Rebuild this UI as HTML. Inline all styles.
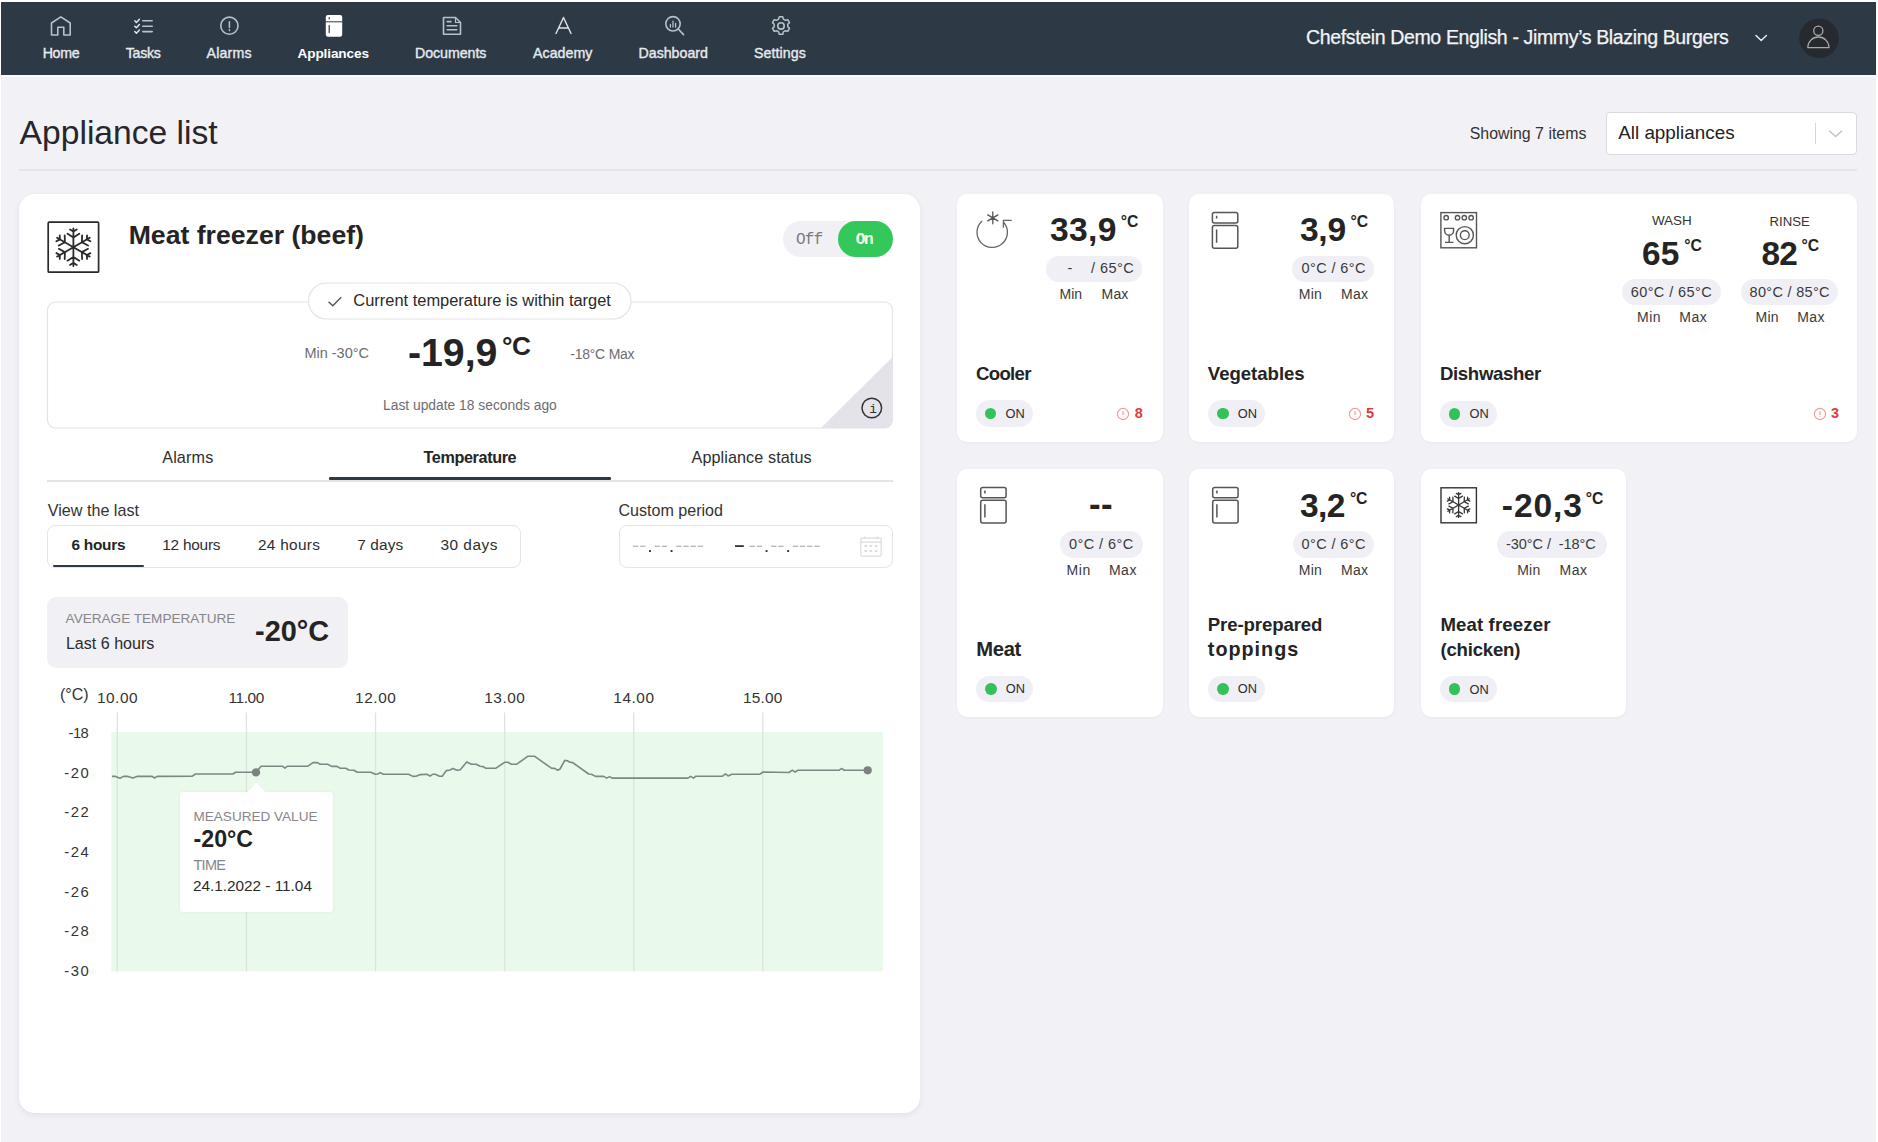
<!DOCTYPE html>
<html><head><meta charset="utf-8"><title>Appliance list</title>
<style>
html,body{margin:0;padding:0;}
body{width:1878px;height:1142px;position:relative;overflow:hidden;background:#fff;font-family:"Liberation Sans", sans-serif;}
.t{position:absolute;white-space:pre;font-family:"Liberation Sans", sans-serif;}
svg{overflow:visible;}
</style></head><body>
<div style="position:absolute;left:1px;top:77px;width:1875px;height:1065px;background:#f2f1f6;"></div>
<div style="position:absolute;left:1px;top:2px;width:1875px;height:73px;background:#2d3a46;"></div>
<div style="position:absolute;left:1px;top:75px;width:1875px;height:2px;background:#fafafc;"></div>
<div class="t" style="left:42.70px;top:44.96px;font-size:14.20px;line-height:17.04px;font-weight:normal;color:#e8ebee;letter-spacing:-0.338px;-webkit-text-stroke:0.35px #e8ebee;">Home</div>
<div class="t" style="left:125.80px;top:44.96px;font-size:14.20px;line-height:17.04px;font-weight:normal;color:#e8ebee;letter-spacing:-0.295px;-webkit-text-stroke:0.35px #e8ebee;">Tasks</div>
<div class="t" style="left:206.50px;top:44.96px;font-size:14.20px;line-height:17.04px;font-weight:normal;color:#e8ebee;letter-spacing:0.168px;-webkit-text-stroke:0.35px #e8ebee;">Alarms</div>
<div class="t" style="left:297.50px;top:45.53px;font-size:13.60px;line-height:16.32px;font-weight:bold;color:#ffffff;letter-spacing:-0.117px;">Appliances</div>
<div class="t" style="left:415.00px;top:44.96px;font-size:14.20px;line-height:17.04px;font-weight:normal;color:#e8ebee;letter-spacing:-0.044px;-webkit-text-stroke:0.35px #e8ebee;">Documents</div>
<div class="t" style="left:533.00px;top:44.96px;font-size:14.20px;line-height:17.04px;font-weight:normal;color:#e8ebee;letter-spacing:0.048px;-webkit-text-stroke:0.35px #e8ebee;">Academy</div>
<div class="t" style="left:638.50px;top:44.96px;font-size:14.20px;line-height:17.04px;font-weight:normal;color:#e8ebee;-webkit-text-stroke:0.35px #e8ebee;">Dashboard</div>
<div class="t" style="left:754.00px;top:44.96px;font-size:14.20px;line-height:17.04px;font-weight:normal;color:#e8ebee;letter-spacing:0.095px;-webkit-text-stroke:0.35px #e8ebee;">Settings</div>
<svg style="position:absolute;left:0;top:0" width="1878" height="80" fill="none" stroke="#b9c1c9" stroke-width="1.6" stroke-linejoin="round" stroke-linecap="round">
<path d="M51.5 35 V23 L60.8 16.8 L70.2 23 V35 H63.8 V27.2 H57.8 V35 Z"/>
<path d="M134.8 20.8 l1.6 1.6 l3-3.2 M134.8 26.2 l1.6 1.6 l3-3.2 M134.8 31.6 l1.6 1.6 l3-3.2" stroke="#e8ebee" stroke-width="1.4"/>
<path d="M142.8 20.8 H152.2 M142.8 26.2 H152.2 M142.8 31.6 H152.2" stroke-width="1.6"/>
<circle cx="229.4" cy="25.7" r="8.6"/>
<path d="M229.4 21.8 V27.6 M229.4 29.8 V30.4" stroke-width="1.5"/>
<rect x="325.8" y="15" width="16.4" height="21.7" rx="2.2" fill="#ffffff" stroke="none"/>
<path d="M325.8 21.8 H342.2" stroke="#2d3a46" stroke-width="1"/>
<path d="M329.2 17.6 V18.8 M329.2 25.4 V32.6" stroke="#2d3a46" stroke-width="1.2"/>
<path d="M443.5 17.5 H455.5 L460.5 22.5 V34.3 H443.5 Z" />
<path d="M455.5 17.5 V22.5 H460.5" stroke-width="1.2"/>
<path d="M447.2 21.6 H451 M447.2 25.8 H456.8 M447.2 29.8 H456.8" stroke-width="1.6"/>
<path d="M556 33.5 L563.5 17.5 L571 33.5 M558.6 28 H568.4" stroke="#dfe3e7" stroke-width="1.4"/>
<circle cx="673" cy="23.8" r="7.2"/>
<path d="M678.2 29 L683.6 34.6"/>
<path d="M670.4 27 V24.4 M673 27 V21.2 M675.6 27 V23.4" stroke-width="1.3"/>
<circle cx="781" cy="25.9" r="3.2"/>
<path d="M779.3 16.8 h3.4 l0.7 2.3 l2.1 1.2 l2.3-0.6 l1.7 2.9 l-1.7 1.7 v2.4 l1.7 1.7 l-1.7 2.9 l-2.3-0.6 l-2.1 1.2 l-0.7 2.3 h-3.4 l-0.7-2.3 l-2.1-1.2 l-2.3 0.6 l-1.7-2.9 l1.7-1.7 v-2.4 l-1.7-1.7 l1.7-2.9 l2.3 0.6 l2.1-1.2 z" stroke-width="1.5"/>
<path d="M1756 35.5 L1761.2 40.5 L1766.4 35.5" stroke="#e8ebee" stroke-width="1.5"/>
<circle cx="1819" cy="38.2" r="19.8" fill="#262a2e" stroke="none"/>
<circle cx="1818.3" cy="30.8" r="4.6" stroke="#a9a9a9" stroke-width="1.3"/>
<path d="M1807.8 47.6 A10.6 10.6 0 0 1 1829 47.6 Z" stroke="#a9a9a9" stroke-width="1.3"/>
</svg>
<div class="t" style="left:1306.00px;top:26.41px;font-size:19.54px;line-height:23.45px;font-weight:normal;color:#f2f4f6;letter-spacing:-0.372px;-webkit-text-stroke:0.25px #f2f4f6;">Chefstein Demo English - Jimmy’s Blazing Burgers</div>
<div class="t" style="left:19.60px;top:112.57px;font-size:33.63px;line-height:40.36px;font-weight:normal;color:#26262b;">Appliance list</div>
<div style="position:absolute;left:19px;top:169.4px;width:1838px;height:1.4000000000000057px;background:#e6e5ec;"></div>
<div class="t" style="left:1469.70px;top:123.93px;font-size:15.92px;line-height:19.11px;font-weight:normal;color:#333;">Showing 7 items</div>
<div style="position:absolute;left:1605.5px;top:112px;width:251.5px;height:42.5px;background:#fff;border:1px solid #d9d9de;border-radius:4px;box-sizing:border-box;"></div>
<div class="t" style="left:1618.20px;top:122.24px;font-size:18.87px;line-height:22.64px;font-weight:normal;color:#222;">All appliances</div>
<div style="position:absolute;left:1814.5px;top:123px;width:1.0px;height:21px;background:#d4d4d8;"></div>
<svg style="position:absolute;left:1820px;top:120px" width="30" height="25" fill="none" stroke="#c2c2c6" stroke-width="1.4"><path d="M9.2 10.8 L15.6 16.6 L22 10.8"/></svg>
<div style="position:absolute;left:19px;top:193.5px;width:901px;height:919.5px;background:#fff;border-radius:16px;box-shadow:0 2px 6px rgba(40,40,90,0.08);"></div>
<svg style="position:absolute;left:0;top:0" width="940" height="300"><rect x="48.2" y="222.2" width="50.4" height="50" rx="1" fill="none" stroke="#2a2a2a" stroke-width="1.7"/><path d="M73.40 247.20 L73.40 228.40 M73.40 237.42 L67.50 233.74 M73.40 237.42 L79.30 233.74 M73.40 231.60 L70.05 229.50 M73.40 231.60 L76.75 229.50 M73.40 247.20 L57.12 237.80 M64.93 242.31 L58.79 245.58 M64.93 242.31 L64.69 235.36 M59.89 239.40 L56.40 241.25 M59.89 239.40 L59.75 235.45 M73.40 247.20 L57.12 256.60 M64.93 252.09 L64.69 259.04 M64.93 252.09 L58.79 248.82 M59.89 255.00 L59.75 258.95 M59.89 255.00 L56.40 253.15 M73.40 247.20 L73.40 266.00 M73.40 256.98 L79.30 260.66 M73.40 256.98 L67.50 260.66 M73.40 262.80 L76.75 264.90 M73.40 262.80 L70.05 264.90 M73.40 247.20 L89.68 256.60 M81.87 252.09 L88.01 248.82 M81.87 252.09 L82.11 259.04 M86.91 255.00 L90.40 253.15 M86.91 255.00 L87.05 258.95 M73.40 247.20 L89.68 237.80 M81.87 242.31 L82.11 235.36 M81.87 242.31 L88.01 245.58 M86.91 239.40 L87.05 235.45 M86.91 239.40 L90.40 241.25" stroke="#2a2a2a" stroke-width="1.8" stroke-linecap="round" fill="none"/></svg>
<div class="t" style="left:128.70px;top:220.19px;font-size:26.63px;line-height:31.96px;font-weight:bold;color:#242424;">Meat freezer (beef)</div>
<div style="position:absolute;left:783px;top:221px;width:109.5px;height:36px;background:#f1f0f5;border-radius:18px;"></div>
<div style="position:absolute;left:837.5px;top:221px;width:55.0px;height:36px;background:#34c759;border-radius:18px;"></div>
<div class="t" style="left:796.00px;top:230.74px;font-size:16.12px;line-height:19.34px;font-weight:normal;color:#7a7a7e;font-family:'Liberation Mono', monospace;letter-spacing:-0.857px;">Off</div>
<div class="t" style="left:855.80px;top:230.74px;font-size:16.12px;line-height:19.34px;font-weight:bold;color:#f3fff3;font-family:'Liberation Mono', monospace;letter-spacing:-1.442px;">On</div>
<svg style="position:absolute;left:0;top:0" width="940" height="440"><rect x="47.5" y="302" width="845" height="126" rx="8" fill="#fff" stroke="#e3e3e8" stroke-width="1.2"/><path d="M821 428 L892.5 357 V420 Q892.5 428 884.5 428 Z" fill="#e4e3ea"/><rect x="308.5" y="283" width="322.5" height="36" rx="18" fill="#fff" stroke="#e3e3e8" stroke-width="1.2"/><path d="M328.5 301.8 L332.8 305.8 L341.2 297.2" fill="none" stroke="#555" stroke-width="1.4"/><circle cx="871.8" cy="408" r="9.8" fill="none" stroke="#333" stroke-width="1.5"/></svg>
<div class="t" style="left:869.30px;top:402.44px;font-size:13.00px;line-height:15.6px;font-weight:normal;color:#333;font-family:'Liberation Mono', monospace;">i</div>
<div class="t" style="left:353.30px;top:291.04px;font-size:16.44px;line-height:19.73px;font-weight:normal;color:#2a2a2a;">Current temperature is within target</div>
<div class="t" style="left:304.40px;top:345.18px;font-size:14.50px;line-height:17.4px;font-weight:normal;color:#6d6d72;">Min -30°C</div>
<div class="t" style="left:570.20px;top:345.71px;font-size:13.94px;line-height:16.72px;font-weight:normal;color:#6d6d72;letter-spacing:-0.198px;">-18°C Max</div>
<div class="t" style="left:407.90px;top:329.40px;font-size:39.30px;line-height:47.16px;font-weight:bold;color:#242424;">-19,9</div>
<div class="t" style="left:502.00px;top:331.27px;font-size:26.23px;line-height:31.48px;font-weight:bold;color:#242424;letter-spacing:-0.380px;">°C</div>
<div class="t" style="left:383.00px;top:396.61px;font-size:13.83px;line-height:16.6px;font-weight:normal;color:#6d6d72;">Last update 18 seconds ago</div>
<div style="position:absolute;left:47px;top:480px;width:846px;height:1.5px;background:#e4e4e8;"></div>
<div style="position:absolute;left:328.5px;top:477.3px;width:282.5px;height:3.1999999999999886px;background:#2f3845;border-radius:1px;"></div>
<div class="t" style="left:162.20px;top:448.37px;font-size:16.20px;line-height:19.44px;font-weight:normal;color:#2e2e2e;letter-spacing:0.144px;">Alarms</div>
<div class="t" style="left:423.50px;top:448.37px;font-size:16.20px;line-height:19.44px;font-weight:bold;color:#242424;letter-spacing:-0.376px;">Temperature</div>
<div class="t" style="left:691.50px;top:448.37px;font-size:16.20px;line-height:19.44px;font-weight:normal;color:#2e2e2e;letter-spacing:0.086px;">Appliance status</div>
<div class="t" style="left:47.70px;top:500.91px;font-size:16.16px;line-height:19.39px;font-weight:normal;color:#333;">View the last</div>
<div class="t" style="left:618.40px;top:500.98px;font-size:16.08px;line-height:19.3px;font-weight:normal;color:#333;">Custom period</div>
<div style="position:absolute;left:47px;top:524.5px;width:474px;height:43.5px;background:#fff;border:1.2px solid #e5e5ea;border-radius:8px;box-sizing:border-box;"></div>
<div style="position:absolute;left:53px;top:565.2px;width:91px;height:2.199999999999932px;background:#2f3845;border-radius:1px;"></div>
<div class="t" style="left:71.50px;top:535.62px;font-size:15.40px;line-height:18.48px;font-weight:bold;color:#242424;letter-spacing:-0.266px;">6 hours</div>
<div class="t" style="left:162.20px;top:535.62px;font-size:15.40px;line-height:18.48px;font-weight:normal;color:#2e2e2e;letter-spacing:-0.229px;">12 hours</div>
<div class="t" style="left:258.00px;top:535.62px;font-size:15.40px;line-height:18.48px;font-weight:normal;color:#2e2e2e;letter-spacing:0.285px;">24 hours</div>
<div class="t" style="left:357.20px;top:535.62px;font-size:15.40px;line-height:18.48px;font-weight:normal;color:#2e2e2e;letter-spacing:0.129px;">7 days</div>
<div class="t" style="left:440.50px;top:535.62px;font-size:15.40px;line-height:18.48px;font-weight:normal;color:#2e2e2e;letter-spacing:0.487px;">30 days</div>
<div style="position:absolute;left:618.5px;top:525px;width:274.0px;height:42.5px;background:#fff;border:1.2px solid #e5e5ea;border-radius:8px;box-sizing:border-box;"></div>
<svg style="position:absolute;left:0;top:0" width="940" height="600"><rect x="632.9" y="545.6" width="5.4" height="1.4" fill="#b9b9bd"/><rect x="640.1" y="545.6" width="5.4" height="1.4" fill="#b9b9bd"/><rect x="649.0" y="550.1" width="1.9" height="1.9" fill="#333"/><rect x="654.5" y="545.6" width="5.4" height="1.4" fill="#b9b9bd"/><rect x="661.7" y="545.6" width="5.4" height="1.4" fill="#b9b9bd"/><rect x="670.6" y="550.1" width="1.9" height="1.9" fill="#333"/><rect x="676.1" y="545.6" width="5.4" height="1.4" fill="#b9b9bd"/><rect x="683.3" y="545.6" width="5.4" height="1.4" fill="#b9b9bd"/><rect x="690.5" y="545.6" width="5.4" height="1.4" fill="#b9b9bd"/><rect x="697.7" y="545.6" width="5.4" height="1.4" fill="#b9b9bd"/><rect x="749.5" y="545.6" width="5.4" height="1.4" fill="#b9b9bd"/><rect x="756.7" y="545.6" width="5.4" height="1.4" fill="#b9b9bd"/><rect x="765.6" y="550.1" width="1.9" height="1.9" fill="#333"/><rect x="771.1" y="545.6" width="5.4" height="1.4" fill="#b9b9bd"/><rect x="778.3" y="545.6" width="5.4" height="1.4" fill="#b9b9bd"/><rect x="787.2" y="550.1" width="1.9" height="1.9" fill="#333"/><rect x="792.7" y="545.6" width="5.4" height="1.4" fill="#b9b9bd"/><rect x="799.9" y="545.6" width="5.4" height="1.4" fill="#b9b9bd"/><rect x="807.1" y="545.6" width="5.4" height="1.4" fill="#b9b9bd"/><rect x="814.3" y="545.6" width="5.4" height="1.4" fill="#b9b9bd"/><rect x="735" y="545.2" width="8.8" height="1.8" fill="#333"/><g fill="none" stroke="#dcdce0" stroke-width="1.2"><rect x="860.8" y="538.2" width="20.4" height="18" rx="1.5"/><path d="M860.8 542.2 H881.2 M864.5 536.6 V539 M877.5 536.6 V539"/></g><g fill="#dcdce0"><rect x="864.4" y="545" width="2.6" height="2"/><rect x="869.6" y="545" width="2.6" height="2"/><rect x="874.8" y="545" width="2.6" height="2"/><rect x="864.4" y="550" width="2.6" height="2"/><rect x="869.6" y="550" width="2.6" height="2"/><rect x="874.8" y="550" width="2.6" height="2"/></g></svg>
<div style="position:absolute;left:47.2px;top:596.5px;width:301.1px;height:71.5px;background:#f1f0f5;border-radius:9px;"></div>
<div class="t" style="left:65.60px;top:611.13px;font-size:13.59px;line-height:16.31px;font-weight:normal;color:#86868b;">AVERAGE TEMPERATURE</div>
<div class="t" style="left:65.90px;top:633.97px;font-size:16.09px;line-height:19.31px;font-weight:normal;color:#2a2a2a;">Last 6 hours</div>
<div class="t" style="left:255.00px;top:613.84px;font-size:28.91px;line-height:34.69px;font-weight:bold;color:#242424;">-20°C</div>
<svg style="position:absolute;left:0;top:0" width="940" height="1000"><rect x="111.3" y="731.8" width="771.7" height="239.5" fill="#e9f9ea"/><rect x="116.7" y="712.5" width="1.3" height="259" fill="#dde4de"/><rect x="245.8" y="712.5" width="1.3" height="259" fill="#dde4de"/><rect x="374.9" y="712.5" width="1.3" height="259" fill="#dde4de"/><rect x="504.0" y="712.5" width="1.3" height="259" fill="#dde4de"/><rect x="633.1" y="712.5" width="1.3" height="259" fill="#dde4de"/><rect x="762.2" y="712.5" width="1.3" height="259" fill="#dde4de"/><path d="M111.9 776.4 L115.6 776.4 L119.9 778.2 L123.6 776.4 L127.4 776.2 L132.7 778.0 L137.0 776.4 L151.9 776.2 L154.5 778.0 L157.2 776.4 L192.3 776.2 L195.5 774.0 L232.8 774.0 L235.5 772.3 L256.0 772.3 L261.1 766.2 L282.4 766.2 L284.9 768.1 L287.5 766.2 L307.9 766.2 L313.0 762.6 L317.3 762.6 L320.3 764.3 L327.5 764.3 L331.8 766.4 L336.9 766.4 L340.3 768.3 L345.8 768.3 L348.8 770.0 L353.9 770.2 L357.3 772.3 L370.9 772.3 L375.2 774.3 L377.8 774.0 L380.3 772.6 L383.3 774.3 L408.6 774.3 L412.9 776.4 L416.1 776.2 L420.3 774.6 L427.3 774.3 L429.9 776.1 L432.6 774.3 L435.3 774.3 L439.5 776.2 L442.2 776.2 L446.4 770.6 L450.2 770.0 L452.8 768.4 L457.1 770.3 L460.3 769.7 L466.7 762.0 L471.5 764.2 L476.3 764.2 L480.0 766.3 L483.2 766.6 L485.8 768.2 L496.0 768.2 L504.6 762.3 L507.8 762.3 L511.5 764.2 L516.8 764.2 L528.0 756.2 L534.4 756.2 L551.4 768.2 L554.6 768.4 L557.8 770.2 L560.0 769.0 L564.8 760.4 L567.4 760.8 L569.5 762.0 L572.7 762.6 L588.7 774.0 L591.4 774.3 L595.6 776.4 L603.6 776.4 L606.8 778.1 L609.5 776.6 L612.1 778.1 L687.8 778.1 L690.7 776.4 L693.5 778.1 L695.8 776.2 L722.5 776.2 L725.5 773.9 L728.1 775.9 L731.9 774.2 L760.0 774.2 L763.0 772.0 L789.0 772.5 L792.4 770.2 L795.0 772.0 L798.0 770.2 L839.3 770.2 L841.4 768.5 L844.4 770.3 L867.8 770.3" fill="none" stroke="#7f8782" stroke-width="1.6" stroke-linejoin="round"/><circle cx="256" cy="772.4" r="4.2" fill="#7d8280"/><circle cx="867.7" cy="770.3" r="4.1" fill="#7d8280"/></svg>
<div class="t" style="left:60.00px;top:684.72px;font-size:16.03px;line-height:19.24px;font-weight:normal;color:#333;">(°C)</div>
<div class="t" style="left:96.90px;top:689.12px;font-size:15.40px;line-height:18.48px;font-weight:normal;color:#333;letter-spacing:0.556px;">10.00</div>
<div class="t" style="left:228.40px;top:689.12px;font-size:15.40px;line-height:18.48px;font-weight:normal;color:#333;letter-spacing:-0.356px;">11.00</div>
<div class="t" style="left:355.10px;top:689.12px;font-size:15.40px;line-height:18.48px;font-weight:normal;color:#333;letter-spacing:0.556px;">12.00</div>
<div class="t" style="left:484.20px;top:689.12px;font-size:15.40px;line-height:18.48px;font-weight:normal;color:#333;letter-spacing:0.556px;">13.00</div>
<div class="t" style="left:613.30px;top:689.12px;font-size:15.40px;line-height:18.48px;font-weight:normal;color:#333;letter-spacing:0.556px;">14.00</div>
<div class="t" style="left:743.10px;top:689.12px;font-size:15.40px;line-height:18.48px;font-weight:normal;color:#333;letter-spacing:0.206px;">15.00</div>
<div class="t" style="left:68.60px;top:724.89px;font-size:14.80px;line-height:17.76px;font-weight:normal;color:#333;letter-spacing:-0.643px;">-18</div>
<div class="t" style="left:64.30px;top:764.59px;font-size:14.80px;line-height:17.76px;font-weight:normal;color:#333;letter-spacing:1.507px;">-20</div>
<div class="t" style="left:64.30px;top:804.29px;font-size:14.80px;line-height:17.76px;font-weight:normal;color:#333;letter-spacing:1.507px;">-22</div>
<div class="t" style="left:64.30px;top:843.99px;font-size:14.80px;line-height:17.76px;font-weight:normal;color:#333;letter-spacing:1.507px;">-24</div>
<div class="t" style="left:64.30px;top:883.69px;font-size:14.80px;line-height:17.76px;font-weight:normal;color:#333;letter-spacing:1.507px;">-26</div>
<div class="t" style="left:64.30px;top:923.39px;font-size:14.80px;line-height:17.76px;font-weight:normal;color:#333;letter-spacing:1.507px;">-28</div>
<div class="t" style="left:64.30px;top:963.09px;font-size:14.80px;line-height:17.76px;font-weight:normal;color:#333;letter-spacing:1.507px;">-30</div>
<div style="position:absolute;left:180.2px;top:791.5px;width:152.4px;height:120.7px;background:#fff;border-radius:3px;box-shadow:0 0 3px rgba(0,0,0,0.06);"></div>
<svg style="position:absolute;left:0;top:0" width="940" height="1000"><path d="M247.5 792 L256.4 782.8 L265.3 792 Z" fill="#fff"/></svg>
<div class="t" style="left:193.50px;top:808.96px;font-size:13.56px;line-height:16.28px;font-weight:normal;color:#86868b;">MEASURED VALUE</div>
<div class="t" style="left:193.50px;top:826.01px;font-size:23.23px;line-height:27.88px;font-weight:bold;color:#222;">-20°C</div>
<div class="t" style="left:193.50px;top:857.18px;font-size:14.50px;line-height:17.4px;font-weight:normal;color:#86868b;letter-spacing:-0.752px;">TIME</div>
<div class="t" style="left:192.90px;top:877.08px;font-size:15.34px;line-height:18.41px;font-weight:normal;color:#2a2a2a;">24.1.2022 - 11.04</div>
<div style="position:absolute;left:957px;top:194px;width:205.5px;height:248px;background:#fff;border-radius:10px;box-shadow:0 1px 3px rgba(40,40,80,0.05);"></div>
<div style="position:absolute;left:1189px;top:194px;width:205px;height:248px;background:#fff;border-radius:10px;box-shadow:0 1px 3px rgba(40,40,80,0.05);"></div>
<div style="position:absolute;left:1421px;top:194px;width:436px;height:248px;background:#fff;border-radius:10px;box-shadow:0 1px 3px rgba(40,40,80,0.05);"></div>
<div style="position:absolute;left:957px;top:469px;width:205.5px;height:248px;background:#fff;border-radius:10px;box-shadow:0 1px 3px rgba(40,40,80,0.05);"></div>
<div style="position:absolute;left:1189px;top:469px;width:205px;height:248px;background:#fff;border-radius:10px;box-shadow:0 1px 3px rgba(40,40,80,0.05);"></div>
<div style="position:absolute;left:1421px;top:469px;width:204.70000000000005px;height:248px;background:#fff;border-radius:10px;box-shadow:0 1px 3px rgba(40,40,80,0.05);"></div>
<svg style="position:absolute;left:0;top:0" width="1878" height="760"><g fill="none" stroke="#666" stroke-width="1.3" stroke-linecap="round"><path d="M981.8 221.2 A15.2 15.2 0 1 0 1003.6 222.2"/><path d="M1011.2 220.4 H1003.4 V227.2"/><path d="M992.8 212 V223.8 M987.7 214.9 L997.9 220.9 M987.7 220.9 L997.9 214.9" stroke="#555" stroke-width="1.3"/></g><g fill="none" stroke="#555" stroke-width="1.5"><rect x="1212.4" y="212.6" width="25.4" height="10.4" rx="2"/><rect x="1212.4" y="225.39999999999998" width="25.4" height="22.8" rx="2"/><path d="M1216.6 215.79999999999998 V218.6 M1216.6 229.39999999999998 V242.79999999999998"/></g><g fill="none" stroke="#555" stroke-width="1.4"><rect x="1440.9" y="212.6" width="35.6" height="35.2"/><circle cx="1446.2" cy="217.7" r="2.2"/><circle cx="1457.5" cy="217.7" r="2.2"/><circle cx="1464.3" cy="217.7" r="2.2"/><circle cx="1471.1" cy="217.7" r="2.2"/><path d="M1444.6 228.4 H1453.6 V230.4 A4.5 4.8 0 0 1 1444.6 230.4 Z"/><path d="M1449.2 235.4 V242 M1445 242.4 H1453.4" /><circle cx="1464.8" cy="235.2" r="8.6"/><circle cx="1464.8" cy="235.2" r="4.4"/></g><g fill="none" stroke="#555" stroke-width="1.5"><rect x="980.6999999999999" y="487.4" width="25.4" height="10.4" rx="2"/><rect x="980.6999999999999" y="500.2" width="25.4" height="22.8" rx="2"/><path d="M984.9 490.6 V493.4 M984.9 504.2 V517.6"/></g><g fill="none" stroke="#555" stroke-width="1.5"><rect x="1212.7" y="487.4" width="25.4" height="10.4" rx="2"/><rect x="1212.7" y="500.2" width="25.4" height="22.8" rx="2"/><path d="M1216.8999999999999 490.6 V493.4 M1216.8999999999999 504.2 V517.6"/></g><rect x="1441.0" y="487.8" width="35.4" height="35" fill="none" stroke="#333" stroke-width="1.4"/><path d="M1458.60 505.00 L1458.60 492.60 M1458.60 498.55 L1454.71 496.12 M1458.60 498.55 L1462.49 496.12 M1458.60 494.71 L1456.39 493.33 M1458.60 494.71 L1460.81 493.33 M1458.60 505.00 L1447.86 498.80 M1453.02 501.78 L1448.96 503.93 M1453.02 501.78 L1452.86 497.19 M1449.69 499.85 L1447.39 501.08 M1449.69 499.85 L1449.60 497.25 M1458.60 505.00 L1447.86 511.20 M1453.02 508.22 L1452.86 512.81 M1453.02 508.22 L1448.96 506.07 M1449.69 510.15 L1449.60 512.75 M1449.69 510.15 L1447.39 508.92 M1458.60 505.00 L1458.60 517.40 M1458.60 511.45 L1462.49 513.88 M1458.60 511.45 L1454.71 513.88 M1458.60 515.29 L1460.81 516.67 M1458.60 515.29 L1456.39 516.67 M1458.60 505.00 L1469.34 511.20 M1464.18 508.22 L1468.24 506.07 M1464.18 508.22 L1464.34 512.81 M1467.51 510.15 L1469.81 508.92 M1467.51 510.15 L1467.60 512.75 M1458.60 505.00 L1469.34 498.80 M1464.18 501.78 L1464.34 497.19 M1464.18 501.78 L1468.24 503.93 M1467.51 499.85 L1467.60 497.25 M1467.51 499.85 L1469.81 501.08" stroke="#333" stroke-width="1.3" stroke-linecap="round" fill="none"/></svg>
<div class="t" style="left:1050.00px;top:209.60px;font-size:33.60px;line-height:40.32px;font-weight:bold;color:#242424;letter-spacing:0.383px;">33,9</div>
<div class="t" style="left:1120.80px;top:213.24px;font-size:15.70px;line-height:18.84px;font-weight:bold;color:#242424;letter-spacing:0.016px;">°C</div>
<div style="position:absolute;left:1046px;top:256px;width:96px;height:26px;background:#f0eff5;border-radius:14px;"></div>
<div class="t" style="left:1067.60px;top:260.18px;font-size:14.50px;line-height:17.4px;font-weight:normal;color:#3a3a3a;">-</div>
<div class="t" style="left:1091.00px;top:260.18px;font-size:14.50px;line-height:17.4px;font-weight:normal;color:#3a3a3a;letter-spacing:0.429px;">/ 65°C</div>
<div class="t" style="left:1059.60px;top:285.65px;font-size:14.00px;line-height:16.8px;font-weight:normal;color:#3a3a3a;letter-spacing:-0.120px;">Min</div>
<div class="t" style="left:1101.60px;top:285.65px;font-size:14.00px;line-height:16.8px;font-weight:normal;color:#3a3a3a;letter-spacing:0.120px;">Max</div>
<div class="t" style="left:976.00px;top:363.20px;font-size:18.60px;line-height:22.32px;font-weight:bold;color:#242424;letter-spacing:-0.694px;">Cooler</div>
<div style="position:absolute;left:976px;top:400px;width:57px;height:26.69999999999999px;background:#f0eff5;border-radius:14px;"></div>
<div style="position:absolute;left:984.6px;top:407.5px;width:11.799999999999955px;height:11.800000000000011px;background:#34c15a;border-radius:50%;"></div>
<div class="t" style="left:1005.50px;top:405.88px;font-size:12.80px;line-height:15.36px;font-weight:normal;color:#2a2a2a;">ON</div>
<svg style="position:absolute;left:1114.9px;top:405.6px" width="16" height="16" fill="none" stroke="#eb9a9a" stroke-width="1.1"><circle cx="8" cy="8" r="5.6"/><path d="M8 5.2 V9 M8 10.4 V11" stroke-width="1.2"/></svg>
<div class="t" style="left:1134.70px;top:404.84px;font-size:14.53px;line-height:17.44px;font-weight:bold;color:#e03c3c;">8</div>
<div class="t" style="left:1299.90px;top:209.60px;font-size:33.60px;line-height:40.32px;font-weight:bold;color:#242424;letter-spacing:-0.202px;">3,9</div>
<div class="t" style="left:1350.50px;top:213.24px;font-size:15.70px;line-height:18.84px;font-weight:bold;color:#242424;letter-spacing:0.016px;">°C</div>
<div style="position:absolute;left:1292.4px;top:256px;width:81.5px;height:26px;background:#f0eff5;border-radius:14px;"></div>
<div class="t" style="left:1301.50px;top:260.18px;font-size:14.50px;line-height:17.4px;font-weight:normal;color:#3a3a3a;letter-spacing:0.393px;">0°C / 6°C</div>
<div class="t" style="left:1298.80px;top:285.65px;font-size:14.00px;line-height:16.8px;font-weight:normal;color:#3a3a3a;letter-spacing:0.180px;">Min</div>
<div class="t" style="left:1340.90px;top:285.65px;font-size:14.00px;line-height:16.8px;font-weight:normal;color:#3a3a3a;letter-spacing:0.370px;">Max</div>
<div class="t" style="left:1207.80px;top:363.20px;font-size:18.60px;line-height:22.32px;font-weight:bold;color:#242424;letter-spacing:-0.032px;">Vegetables</div>
<div style="position:absolute;left:1208.3px;top:400px;width:57.0px;height:26.69999999999999px;background:#f0eff5;border-radius:14px;"></div>
<div style="position:absolute;left:1216.8999999999999px;top:407.5px;width:11.800000000000182px;height:11.800000000000011px;background:#34c15a;border-radius:50%;"></div>
<div class="t" style="left:1237.80px;top:405.88px;font-size:12.80px;line-height:15.36px;font-weight:normal;color:#2a2a2a;">ON</div>
<svg style="position:absolute;left:1346.7px;top:405.6px" width="16" height="16" fill="none" stroke="#eb9a9a" stroke-width="1.1"><circle cx="8" cy="8" r="5.6"/><path d="M8 5.2 V9 M8 10.4 V11" stroke-width="1.2"/></svg>
<div class="t" style="left:1365.90px;top:404.84px;font-size:14.53px;line-height:17.44px;font-weight:bold;color:#e03c3c;">5</div>
<div class="t" style="left:1651.90px;top:213.26px;font-size:13.46px;line-height:16.15px;font-weight:normal;color:#333;">WASH</div>
<div class="t" style="left:1769.60px;top:213.55px;font-size:13.16px;line-height:15.79px;font-weight:normal;color:#333;">RINSE</div>
<div class="t" style="left:1641.90px;top:233.59px;font-size:33.40px;line-height:40.08px;font-weight:bold;color:#242424;letter-spacing:0.326px;">65</div>
<div class="t" style="left:1684.30px;top:237.04px;font-size:15.70px;line-height:18.84px;font-weight:bold;color:#242424;letter-spacing:-0.084px;">°C</div>
<div class="t" style="left:1761.60px;top:233.59px;font-size:33.40px;line-height:40.08px;font-weight:bold;color:#242424;letter-spacing:-0.874px;">82</div>
<div class="t" style="left:1801.50px;top:237.04px;font-size:15.70px;line-height:18.84px;font-weight:bold;color:#242424;letter-spacing:-0.084px;">°C</div>
<div style="position:absolute;left:1622px;top:279.3px;width:98.5px;height:25.399999999999977px;background:#f0eff5;border-radius:14px;"></div>
<div style="position:absolute;left:1741.2px;top:279.3px;width:97.20000000000005px;height:25.399999999999977px;background:#f0eff5;border-radius:14px;"></div>
<div class="t" style="left:1630.70px;top:283.88px;font-size:14.50px;line-height:17.4px;font-weight:normal;color:#3a3a3a;letter-spacing:0.415px;">60°C / 65°C</div>
<div class="t" style="left:1749.60px;top:283.88px;font-size:14.50px;line-height:17.4px;font-weight:normal;color:#3a3a3a;letter-spacing:0.305px;">80°C / 85°C</div>
<div class="t" style="left:1636.90px;top:309.25px;font-size:14.00px;line-height:16.8px;font-weight:normal;color:#3a3a3a;letter-spacing:0.580px;">Min</div>
<div class="t" style="left:1679.30px;top:309.25px;font-size:14.00px;line-height:16.8px;font-weight:normal;color:#3a3a3a;letter-spacing:0.520px;">Max</div>
<div class="t" style="left:1755.40px;top:309.25px;font-size:14.00px;line-height:16.8px;font-weight:normal;color:#3a3a3a;letter-spacing:0.330px;">Min</div>
<div class="t" style="left:1797.30px;top:309.25px;font-size:14.00px;line-height:16.8px;font-weight:normal;color:#3a3a3a;letter-spacing:0.370px;">Max</div>
<div class="t" style="left:1439.90px;top:363.20px;font-size:18.60px;line-height:22.32px;font-weight:bold;color:#242424;letter-spacing:-0.327px;">Dishwasher</div>
<div style="position:absolute;left:1440px;top:400.5px;width:57px;height:26.69999999999999px;background:#f0eff5;border-radius:14px;"></div>
<div style="position:absolute;left:1448.6px;top:408.0px;width:11.800000000000182px;height:11.800000000000011px;background:#34c15a;border-radius:50%;"></div>
<div class="t" style="left:1469.50px;top:406.38px;font-size:12.80px;line-height:15.36px;font-weight:normal;color:#2a2a2a;">ON</div>
<svg style="position:absolute;left:1811.7px;top:405.7px" width="16" height="16" fill="none" stroke="#eb9a9a" stroke-width="1.1"><circle cx="8" cy="8" r="5.6"/><path d="M8 5.2 V9 M8 10.4 V11" stroke-width="1.2"/></svg>
<div class="t" style="left:1831.00px;top:404.94px;font-size:14.53px;line-height:17.44px;font-weight:bold;color:#e03c3c;">3</div>
<div class="t" style="left:1088.90px;top:483.41px;font-size:34.85px;line-height:41.83px;font-weight:bold;color:#242424;letter-spacing:0.622px;">--</div>
<div style="position:absolute;left:1060.1px;top:531.3px;width:82.60000000000014px;height:26.40000000000009px;background:#f0eff5;border-radius:14px;"></div>
<div class="t" style="left:1068.90px;top:535.68px;font-size:14.50px;line-height:17.4px;font-weight:normal;color:#3a3a3a;letter-spacing:0.443px;">0°C / 6°C</div>
<div class="t" style="left:1066.40px;top:561.65px;font-size:14.00px;line-height:16.8px;font-weight:normal;color:#3a3a3a;letter-spacing:0.630px;">Min</div>
<div class="t" style="left:1108.90px;top:561.65px;font-size:14.00px;line-height:16.8px;font-weight:normal;color:#3a3a3a;letter-spacing:0.520px;">Max</div>
<div class="t" style="left:976.30px;top:637.28px;font-size:20.20px;line-height:24.24px;font-weight:bold;color:#242424;letter-spacing:-0.352px;">Meat</div>
<div style="position:absolute;left:976.3px;top:675.5px;width:57.0px;height:26.700000000000045px;background:#f0eff5;border-radius:14px;"></div>
<div style="position:absolute;left:984.9px;top:683.0px;width:11.799999999999955px;height:11.799999999999955px;background:#34c15a;border-radius:50%;"></div>
<div class="t" style="left:1005.80px;top:681.38px;font-size:12.80px;line-height:15.36px;font-weight:normal;color:#2a2a2a;">ON</div>
<div class="t" style="left:1299.90px;top:485.90px;font-size:33.60px;line-height:40.32px;font-weight:bold;color:#242424;letter-spacing:-0.602px;">3,2</div>
<div class="t" style="left:1349.90px;top:489.54px;font-size:15.70px;line-height:18.84px;font-weight:bold;color:#242424;letter-spacing:-0.084px;">°C</div>
<div style="position:absolute;left:1292.9px;top:531.3px;width:81.29999999999995px;height:26.40000000000009px;background:#f0eff5;border-radius:14px;"></div>
<div class="t" style="left:1301.50px;top:535.68px;font-size:14.50px;line-height:17.4px;font-weight:normal;color:#3a3a3a;letter-spacing:0.393px;">0°C / 6°C</div>
<div class="t" style="left:1298.80px;top:561.65px;font-size:14.00px;line-height:16.8px;font-weight:normal;color:#3a3a3a;letter-spacing:0.180px;">Min</div>
<div class="t" style="left:1340.90px;top:561.65px;font-size:14.00px;line-height:16.8px;font-weight:normal;color:#3a3a3a;letter-spacing:0.370px;">Max</div>
<div class="t" style="left:1207.80px;top:613.70px;font-size:18.60px;line-height:22.32px;font-weight:bold;color:#242424;letter-spacing:-0.108px;">Pre-prepared</div>
<div class="t" style="left:1207.80px;top:637.66px;font-size:19.80px;line-height:23.76px;font-weight:bold;color:#242424;letter-spacing:0.992px;">toppings</div>
<div style="position:absolute;left:1208.3px;top:675.5px;width:57.0px;height:26.700000000000045px;background:#f0eff5;border-radius:14px;"></div>
<div style="position:absolute;left:1216.8999999999999px;top:683.0px;width:11.800000000000182px;height:11.799999999999955px;background:#34c15a;border-radius:50%;"></div>
<div class="t" style="left:1237.80px;top:681.38px;font-size:12.80px;line-height:15.36px;font-weight:normal;color:#2a2a2a;">ON</div>
<div class="t" style="left:1501.80px;top:485.90px;font-size:33.60px;line-height:40.32px;font-weight:bold;color:#242424;letter-spacing:0.923px;">-20,3</div>
<div class="t" style="left:1585.80px;top:489.54px;font-size:15.70px;line-height:18.84px;font-weight:bold;color:#242424;letter-spacing:-0.084px;">°C</div>
<div style="position:absolute;left:1496.8px;top:531.3px;width:110.20000000000005px;height:26.40000000000009px;background:#f0eff5;border-radius:14px;"></div>
<div class="t" style="left:1506.00px;top:535.68px;font-size:14.50px;line-height:17.4px;font-weight:normal;color:#3a3a3a;letter-spacing:-0.058px;">-30°C /  -18°C</div>
<div class="t" style="left:1517.20px;top:561.65px;font-size:14.00px;line-height:16.8px;font-weight:normal;color:#3a3a3a;letter-spacing:0.230px;">Min</div>
<div class="t" style="left:1559.60px;top:561.65px;font-size:14.00px;line-height:16.8px;font-weight:normal;color:#3a3a3a;letter-spacing:0.470px;">Max</div>
<div class="t" style="left:1440.40px;top:613.60px;font-size:18.60px;line-height:22.32px;font-weight:bold;color:#242424;letter-spacing:0.134px;">Meat freezer</div>
<div class="t" style="left:1440.40px;top:638.80px;font-size:18.60px;line-height:22.32px;font-weight:bold;color:#242424;letter-spacing:-0.194px;">(chicken)</div>
<div style="position:absolute;left:1440px;top:675.7px;width:57px;height:26.700000000000045px;background:#f0eff5;border-radius:14px;"></div>
<div style="position:absolute;left:1448.6px;top:683.2px;width:11.800000000000182px;height:11.799999999999955px;background:#34c15a;border-radius:50%;"></div>
<div class="t" style="left:1469.50px;top:681.58px;font-size:12.80px;line-height:15.36px;font-weight:normal;color:#2a2a2a;">ON</div>
</body></html>
